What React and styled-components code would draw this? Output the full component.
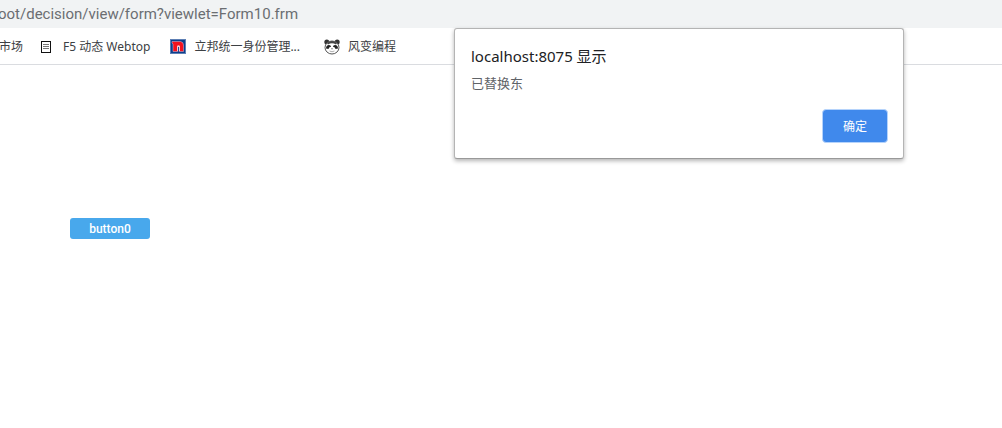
import React, { useState } from 'react';
import styled, { createGlobalStyle } from 'styled-components';

const bookmarks = [
  { id: 'market', name: '市场', space: 0 },
  { id: 'webtop', name: 'F5 动态 Webtop', icon: 'page', space: 4 },
  { id: 'nippon', name: '立邦统一身份管理...', icon: 'nippon', space: 8 },
  { id: 'panda', name: '风变编程', icon: 'panda', space: 0 },
];

const PageIcon = () => (
  <svg width="16" height="16" viewBox="0 0 16 16" aria-hidden="true">
    <path d="M2 2h10v12H2z" fill="#111" />
    <path d="M3 3h8v10H3z" fill="#fff" />
    <path d="M4 5.5h6M4 7.5h6M4 9.5h6" stroke="#777" />
  </svg>
);

const NipponIcon = () => (
  <svg width="16" height="16" viewBox="0 0 16 16" aria-hidden="true">
    <rect x="0.5" y="0.5" width="15" height="14" fill="#0b3f8c" stroke="#5d7fb4" />
    <path
      d="M2 2.5H10.5Q13.5 3 13.5 6V12.5H3V5L2 4z"
      fill="#f5121d"
      stroke="#d5c3df"
      strokeWidth="0.5"
    />
    <path d="M7 12V7Q8.500 5.500 10 7V12z" fill="#f3c9d2" />
    <path d="M8 13V8h1v5z" fill="#274a91" />
  </svg>
);

const PandaIcon = () => (
  <svg width="16" height="16" viewBox="0 0 16 16" aria-hidden="true">
    <circle cx="2.8" cy="3" r="2.5" fill="#333" />
    <circle cx="13.2" cy="3" r="2.5" fill="#333" />
    <ellipse cx="8" cy="8.5" rx="7" ry="6.5" fill="#fff" stroke="#555" />
    <path d="M3 4Q8 0 13 4L12 5.5Q8 3 4 5.5z" fill="#444" />
    <path d="M2 9.5Q2 6 5 6Q7 6 7 8Q5 7.5 4.5 10z" fill="#222" />
    <path d="M14 9.5Q14 6 11 6Q9 6 9 8Q11 7.5 11.5 10z" fill="#222" />
    <path d="M7 9.5h2L8 10.5z" fill="#222" />
    <path d="M5.5 12q2.5 1.5 5 0" fill="none" stroke="#999" strokeWidth=".8" />
  </svg>
);

const icons = { page: PageIcon, nippon: NipponIcon, panda: PandaIcon };

const App = () => {
  const [url, setUrl] = useState('oot/decision/view/form?viewlet=Form10.frm');
  const [isAlertOpen, setIsAlertOpen] = useState(true);

  return (
    <>
      <GlobalStyle />
      <AddressBar>
        <AddressInput
          aria-label="地址"
          value={url}
          onChange={({ target }) => setUrl(target.value)}
        />
      </AddressBar>
      <BookmarkBar>
        {bookmarks.map(({ id, name, icon, space }) => {
          const Icon = icons[icon];
          return (
            <Bookmark key={id} href="#" $space={space}>
              {Icon && <Icon />}
              {name}
            </Bookmark>
          );
        })}
      </BookmarkBar>
      <Content>
        <FormButton onClick={() => setIsAlertOpen(true)}>button0</FormButton>
      </Content>
      {isAlertOpen && (
        <AlertDialog role="alertdialog" aria-labelledby="alert-title">
          <AlertTitle id="alert-title">localhost:8075 显示</AlertTitle>
          <AlertMessage>已替换东</AlertMessage>
          <ConfirmButton onClick={() => setIsAlertOpen(false)}>
            确定
          </ConfirmButton>
        </AlertDialog>
      )}
    </>
  );
};

export default App;

const GlobalStyle = createGlobalStyle`
  * {
    box-sizing: border-box;
  }

  body {
    margin: 0;
    overflow-x: hidden;
    background: #fff;
    font-family: 'Noto Sans', 'Noto Sans CJK SC', sans-serif;
    font-size: 12px;
  }

  button,
  input {
    font-family: inherit;
  }
`;

const AddressBar = styled.header`
  display: flex;
  height: 28px;
  margin-left: -2px;
  background: #f1f3f4;
`;

const AddressInput = styled.input`
  flex: 1;
  min-width: 0;
  padding: 0;
  border: none;
  outline: none;
  background: transparent;
  color: #6b6e72;
  font-family: Roboto, sans-serif;
  font-size: 15px;
  line-height: 28px;
`;

const BookmarkBar = styled.nav`
  display: flex;
  align-items: center;
  gap: 16px;
  height: 37px;
  margin-left: -1px;
  padding-top: 1px;
  border-bottom: 1px solid #dadce0;
`;

const Bookmark = styled.a`
  display: flex;
  align-items: center;
  gap: 8px;
  padding-right: ${({ $space }) => $space}px;
  color: #3c4043;
  line-height: 16px;
  text-decoration: none;
  white-space: nowrap;
`;

const Content = styled.main`
  padding: 153px 70px;
`;

const FormButton = styled.button`
  display: block;
  width: 80px;
  height: 21px;
  padding: 1px 0 0;
  border: none;
  border-radius: 3px;
  background: #48a8ec;
  color: #fff;
  font-family: Roboto, sans-serif;
  font-size: 12px;
  font-weight: 500;
  line-height: 20px;
`;

const AlertDialog = styled.div`
  position: absolute;
  top: 28px;
  right: 98px;
  display: flex;
  flex-direction: column;
  width: 450px;
  padding: 16px 15px 15px 16px;
  border: 1px solid #b4b4b4;
  border-bottom-color: #999;
  border-radius: 3px;
  background: #fff;
  box-shadow: 0 2px 4px rgba(0, 0, 0, 0.3);
`;

const AlertTitle = styled.h1`
  margin: 0;
  color: #202124;
  font-size: 15px;
  font-weight: 400;
  line-height: 22px;
`;

const AlertMessage = styled.p`
  margin: 6px 0 16px;
  color: #5f6368;
  font-size: 13px;
  line-height: 20px;
`;

const ConfirmButton = styled.button`
  align-self: flex-end;
  width: 66px;
  height: 34px;
  padding: 0;
  border: 1px solid #b5d3fb;
  border-radius: 4px;
  background: #4089ec;
  color: #fff;
  font-size: 12px;
`;
